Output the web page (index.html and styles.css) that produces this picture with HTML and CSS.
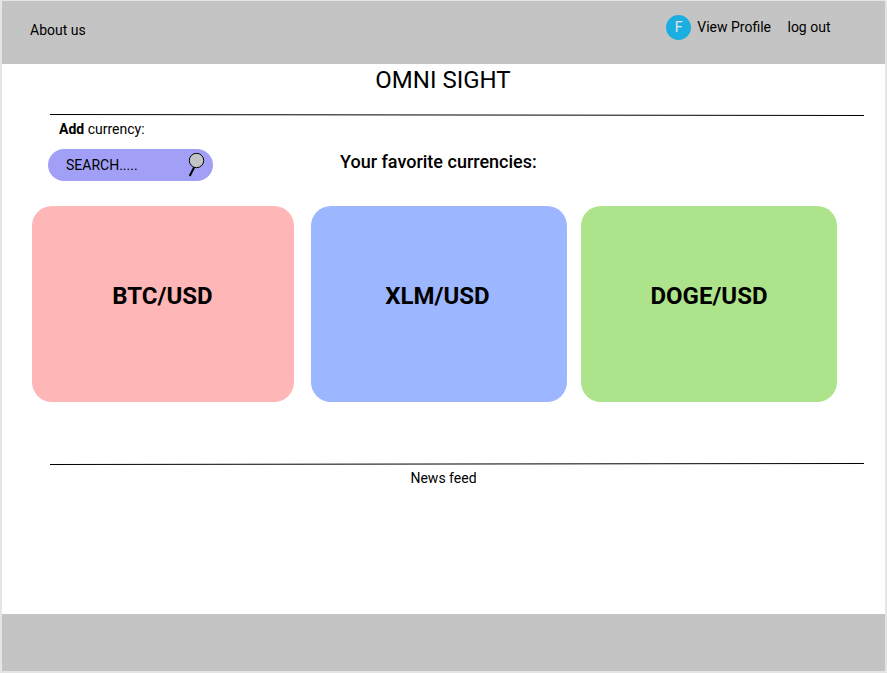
FILE: index.html
```html
<!DOCTYPE html>
<html lang="en">
<head>
<meta charset="utf-8">
<title>Omni Sight</title>
<link rel="stylesheet" href="styles.css">
</head>
<body>
<div class="page">
  <header class="topbar">
    <a class="about">About us</a>
    <nav class="account">
      <span class="avatar">F</span>
      <a class="profile">View Profile</a>
      <a class="logout">log out</a>
    </nav>
  </header>
  <main class="content">
    <h1 class="title">OMNI SIGHT</h1>
    <svg class="rule" width="814" height="2" viewBox="0 0 814 2"><path d="M0 .5L814 1.5" stroke="#000"/></svg>
    <section class="tools">
      <div class="add">
        <p class="add-label"><b>Add</b> currency:</p>
        <div class="search">
          <span>SEARCH.....</span>
          <svg class="lens" width="18" height="26" viewBox="0 0 18 26"><path d="M6.2 15.2L1.7 24" stroke="#000" stroke-width="2"/><circle cx="8.5" cy="8.5" r="7.2" fill="#c4c4c4" stroke="#000"/></svg>
        </div>
      </div>
      <h2 class="subtitle">Your favorite currencies:</h2>
    </section>
    <section class="cards">
      <article class="card btc">BTC/USD</article>
      <article class="card xlm">XLM/USD</article>
      <article class="card doge">DOGE/USD</article>
    </section>
    <svg class="rule" width="814" height="2" viewBox="0 0 814 2"><path d="M0 1.5L814 .5" stroke="#000"/></svg>
    <p class="news">News feed</p>
  </main>
  <footer class="footer"></footer>
</div>
</body>
</html>
```
FILE: styles.css
```css
* { box-sizing: border-box; margin: 0; padding: 0; }
body {
  background: #e5e5e5;
  padding: 1px 2px 2px;
  font: 14px/16px Roboto, sans-serif;
  color: #000;
}
.page { height: 670px; background: #fff; display: flex; flex-direction: column; }
.topbar {
  height: 63px;
  background: #c4c4c4;
  display: flex;
  justify-content: space-between;
  align-items: flex-start;
  padding: 14px 54.5px 0 28px;
}
.about { margin-top: 7px; }
.account { display: flex; align-items: flex-start; }
.avatar {
  width: 25px;
  height: 25px;
  border-radius: 50%;
  background: #1baee1;
  color: #e5e5e5;
  text-align: center;
  line-height: 25px;
  margin-right: 6px;
}
.profile, .logout { margin-top: 4px; }
.profile { margin-right: 16.5px; }
.content { flex: 1; }
.title { font-size: 24px; font-weight: 400; line-height: 28px; padding: 2px 1px 0 0; text-align: center; }
.rule { display: block; margin-left: 48px; }
.title + .rule { margin-top: 20px; }
.tools { display: flex; padding: 5px 0 0 46px; }
.add { width: 165px; }
.add-label { padding-left: 11px; }
.search {
  height: 32px;
  margin-top: 12px;
  border-radius: 16px;
  background: #a2a0f6;
  display: flex;
  justify-content: space-between;
  align-items: center;
  padding: 0 7px 0 18px;
}
.subtitle { font-size: 18px; font-weight: 500; line-height: 21px; margin: 30px 0 0 127px; }
.cards { display: flex; padding: 25px 0 61px 30px; }
.card {
  width: 256px;
  height: 196px;
  border-radius: 20px;
  font-size: 24px;
  font-weight: 700;
  line-height: 28px;
  padding-top: 76px;
  text-align: center;
}
.btc { width: 262px; background: #ffb6b6; margin-right: 17px; padding-right: 1px; }
.xlm { background: #9cb7ff; margin-right: 14px; padding-right: 3px; }
.doge { background: #ade48b; }
.news { margin-top: 5px; text-align: center; }
.footer { height: 57px; background: #c4c4c4; }
```
